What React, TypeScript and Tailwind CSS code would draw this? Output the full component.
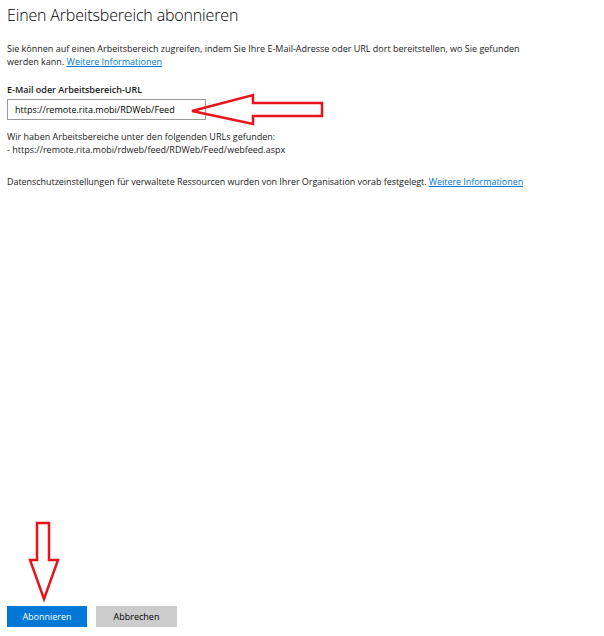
import React, { useState } from 'react';

const App: React.FC = () => {
  const [url, setUrl] = useState<string>('https://remote.rita.mobi/RDWeb/Feed');

  return (
    <div
      className="relative h-[636px] w-[604px] bg-white text-[#1a1a1a] flex flex-col px-[7px]"
      style={{ fontFamily: '"Open Sans", "Noto Sans", sans-serif' }}
    >
      {/* Header */}
      <h1 className="mt-[5px] text-[16px] leading-[20px] font-light tracking-[-0.16px] text-black">
        Einen Arbeitsbereich abonnieren
      </h1>

      {/* Intro */}
      <div className="mt-[17px] text-[9px] leading-[13px] w-[530px]">
        <div>
          Sie können auf einen Arbeitsbereich zugreifen, indem Sie Ihre E-Mail-Adresse oder URL dort bereitstellen, wo Sie gefunden
        </div>
        <div>
          werden kann.{' '}
          <a href="#" className="text-[#0078d7] underline">Weitere Informationen</a>
        </div>
      </div>

      {/* URL field */}
      <label className="mt-[16px] block text-[9px] leading-[12px] font-semibold">E-Mail oder Arbeitsbereich-URL</label>
      <input
        className="mt-[3px] w-[199px] h-[21px] border border-[#999999] px-[7px] text-[9px] text-black outline-none"
        value={url}
        onChange={(e) => setUrl(e.target.value)}
      />

      <div className="mt-[10px] text-[9px] leading-[13px]">
        <div>Wir haben Arbeitsbereiche unter den folgenden URLs gefunden:</div>
        <div>- https://remote.rita.mobi/rdweb/feed/RDWeb/Feed/webfeed.aspx</div>
      </div>

      <p className="mt-[19px] text-[9px] leading-[13px] tracking-[-0.05px]">
        Datenschutzeinstellungen für verwaltete Ressourcen wurden von Ihrer Organisation vorab festgelegt.{' '}
        <a href="#" className="text-[#0078d7] underline">Weitere Informationen</a>
      </p>

      {/* Buttons */}
      <div className="mt-auto mb-[9px] flex gap-[9px]">
        <button className="w-[80px] h-[21px] bg-[#0078d7] text-white text-[9px]">Abonnieren</button>
        <button className="w-[81px] h-[21px] bg-[#cccccc] text-black text-[9px]">Abbrechen</button>
      </div>

      {/* Red annotation arrows */}
      <svg className="absolute inset-0 pointer-events-none" width="604" height="636">
        <polygon
          points="192,111 253,95 253,103 322,103 322,116 253,116 253,124"
          fill="none"
          stroke="#e8141c"
          strokeWidth="2.5"
          strokeLinejoin="miter"
        />
        <polygon
          points="37,523 49,523 49,560 58,560 44,599 30,560 37,560"
          fill="none"
          stroke="#e8141c"
          strokeWidth="2.5"
          strokeLinejoin="miter"
        />
      </svg>
    </div>
  );
};

export default App;
